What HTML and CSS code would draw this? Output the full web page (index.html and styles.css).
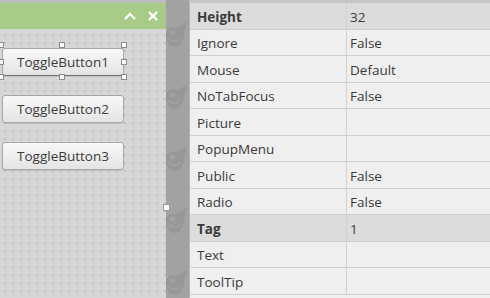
FILE: index.html
```html
<!DOCTYPE html>
<html lang="en">
<head>
    <meta charset="UTF-8">
    <meta name="viewport" content="width=device-width, initial-scale=1.0">
    <title>Window Designer</title>
    <link rel="stylesheet" href="styles.css">
</head>
<body>
    <div class="workspace">
        <div class="designer">
            <div class="designer-bar">
                <svg class="bar-icon" width="12" height="8" viewBox="0 0 12 8">
                    <path d="M1 7 L6 2 L11 7" fill="none" stroke="#fff" stroke-width="2.2"/>
                </svg>
                <svg class="bar-icon" width="10" height="10" viewBox="0 0 10 10">
                    <path d="M1 1 L9 9 M9 1 L1 9" fill="none" stroke="#fff" stroke-width="2.2"/>
                </svg>
            </div>
            <div class="canvas">
                <div class="control">
                    <button class="toggle">ToggleButton1</button>
                    <!-- selection handles -->
                    <span class="handle h-tl"></span>
                    <span class="handle h-tc"></span>
                    <span class="handle h-tr"></span>
                    <span class="handle h-ml"></span>
                    <span class="handle h-mr"></span>
                    <span class="handle h-bl"></span>
                    <span class="handle h-bc"></span>
                    <span class="handle h-br"></span>
                </div>
                <button class="toggle">ToggleButton2</button>
                <button class="toggle">ToggleButton3</button>
                <span class="grip"></span>
            </div>
        </div>

        <div class="gutter">
            <svg width="24" height="298">
                <defs>
                    <pattern id="wilber" x="0" y="21" width="24" height="62" patternUnits="userSpaceOnUse">
                        <path d="M0 13 C0 8 4 6 9 7 C12 7 16 5 21 0 C20 6 19 9 18 13 C18 21 13 26 8.5 26 C3.5 26 0 21 0 13 Z" fill="#979797"/>
                        <ellipse cx="6.5" cy="12" rx="3" ry="2.4" fill="#a2a2a2"/>
                        <path d="M3 17 C5.5 21.5 11 21.5 14.5 17" fill="none" stroke="#a2a2a2" stroke-width="1.6"/>
                    </pattern>
                </defs>
                <rect width="24" height="298" fill="url(#wilber)"/>
            </svg>
        </div>

        <div class="props-pane">
            <table class="props">
                <tbody>
                    <tr class="changed"><td class="name">Height</td><td class="value">32</td></tr>
                    <tr><td class="name">Ignore</td><td class="value">False</td></tr>
                    <tr><td class="name">Mouse</td><td class="value">Default</td></tr>
                    <tr><td class="name">NoTabFocus</td><td class="value">False</td></tr>
                    <tr><td class="name">Picture</td><td class="value"></td></tr>
                    <tr><td class="name">PopupMenu</td><td class="value"></td></tr>
                    <tr><td class="name">Public</td><td class="value">False</td></tr>
                    <tr><td class="name">Radio</td><td class="value">False</td></tr>
                    <tr class="changed"><td class="name">Tag</td><td class="value">1</td></tr>
                    <tr><td class="name">Text</td><td class="value"></td></tr>
                    <tr><td class="name">ToolTip</td><td class="value"></td></tr>
                </tbody>
            </table>
        </div>
    </div>
</body>
</html>
```

FILE: styles.css
```css
body {
    margin: 0;
    font-family: "Open Sans", "DejaVu Sans", sans-serif;
    font-size: 13.5px;
    color: #3a3a3a;
    background-color: #a2a2a2;
    overflow: hidden;
}
.workspace {
    display: flex;
    height: 298px;
}

/* designer panel */
.designer {
    width: 166px;
    flex: none;
    display: flex;
    flex-direction: column;
    border-top: 3px solid #bdbdbd;
}
.designer-bar {
    height: 26px;
    flex: none;
    background-color: #a9cb88;
    display: flex;
    align-items: center;
    justify-content: flex-end;
    gap: 12px;
    padding-right: 8px;
}
.bar-icon {
    display: block;
}
.canvas {
    flex: 1;
    position: relative;
    background-color: #d6d6d6;
    background-image: radial-gradient(circle, #b0b0b0 0.5px, transparent 1px);
    background-size: 8px 8px;
    background-position: 1px 2px;
    display: flex;
    flex-direction: column;
    align-items: flex-start;
    gap: 19px;
    padding: 19px 0 0 2px;
}
.control {
    position: relative;
    width: 122px;
    height: 28px;
}
.toggle {
    display: block;
    width: 122px;
    height: 28px;
    padding: 0;
    font: inherit;
    color: #3c3c3c;
    background: linear-gradient(#f8f8f8, #e4e4e4);
    border: 1px solid #a8a8a8;
    border-radius: 3px;
    box-shadow: 0 1px 0 rgba(0, 0, 0, 0.08);
}
.control .toggle {
    border-bottom-color: #6f6f6f;
}
.handle {
    position: absolute;
    width: 6px;
    height: 6px;
    box-sizing: border-box;
    background-color: #fafafa;
    border: 1px solid #8c8c8c;
}
.h-tl, .h-tc, .h-tr { top: -6px; }
.h-ml, .h-mr { top: 11px; }
.h-bl, .h-bc, .h-br { top: 26px; }
.h-tl, .h-ml, .h-bl { left: -4px; }
.h-tc, .h-bc { left: 57px; }
.h-tr, .h-mr, .h-br { left: 119px; }
.grip {
    position: absolute;
    left: 163px;
    top: 175px;
    z-index: 1;
    width: 7px;
    height: 7px;
    box-sizing: border-box;
    background-color: #fafafa;
    border: 1px solid #9a9a9a;
}

/* gutter with watermark */
.gutter {
    width: 23px;
    flex: none;
    overflow: hidden;
    background-color: #a2a2a2;
}
.gutter svg {
    display: block;
}

/* property list */
.props-pane {
    flex: 1;
    border-top: 3px solid #c6c6c6;
    border-left: 1px solid #b4b4b4;
    background-color: #efefef;
    overflow: hidden;
}
.props {
    width: 100%;
    border-collapse: separate;
    border-spacing: 0;
    table-layout: fixed;
}
.props td {
    line-height: 23px;
    padding: 2.5px 0 0 0;
    border-bottom: 1px solid #cfcfcf;
    white-space: nowrap;
}
.props .name {
    width: 149px;
    padding-left: 7px;
    border-right: 1px solid #d2d2d2;
}
.props .value {
    padding-left: 3px;
}
.props tr.changed td {
    background-color: #dcdcdc;
}
.props tr.changed .name {
    font-weight: bold;
}
```
